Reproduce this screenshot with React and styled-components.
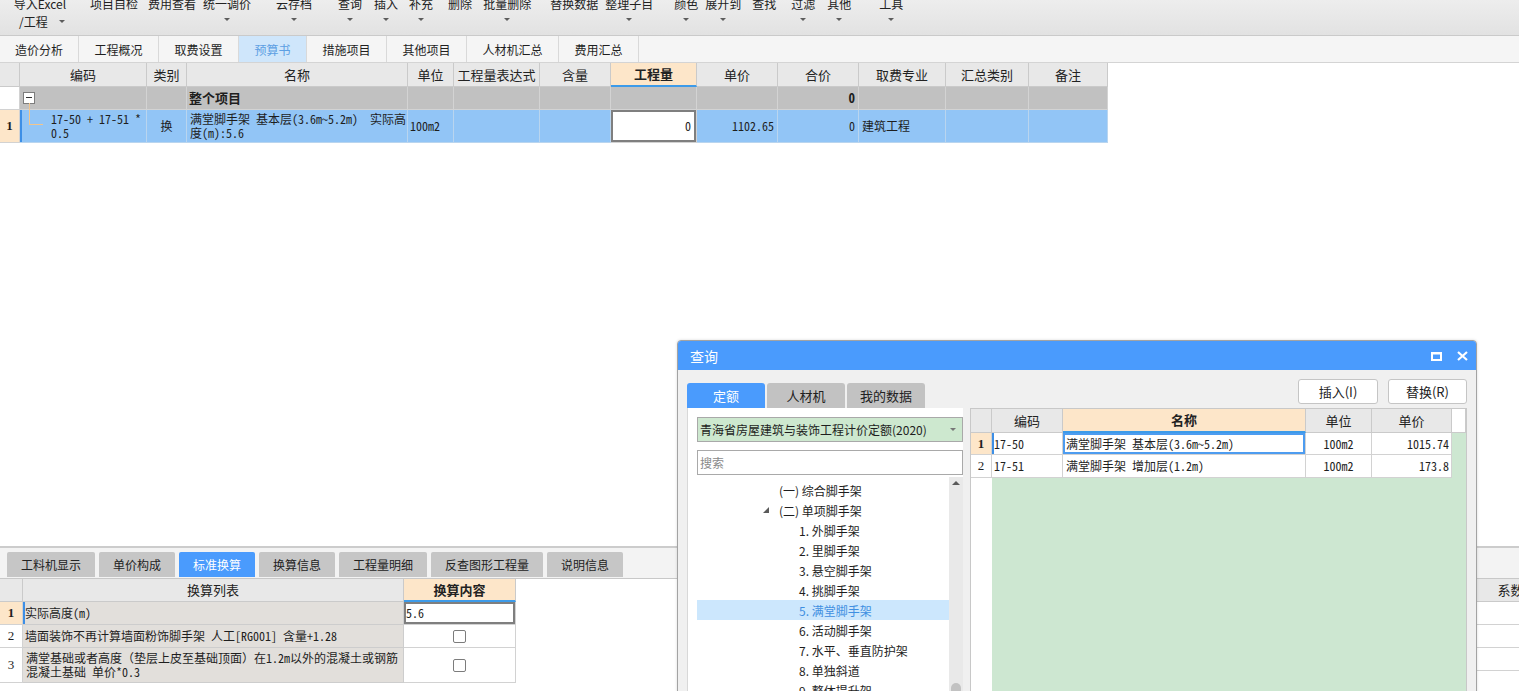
import React from 'react';
import styled, { createGlobalStyle, css } from 'styled-components';

const UI = `"Noto Sans CJK SC", "Noto Sans", sans-serif`;

const GlobalStyle = createGlobalStyle`
  html, body {
    margin: 0;
    padding: 0;
    background: #ffffff;
  }
  body {
    font-family: ${UI};
    font-size: 12px;
    color: #1f1f1f;
    overflow: hidden;
  }
  *, *::before, *::after {
    box-sizing: border-box;
  }
`;

const toolItems = [
  { label: '导入Excel', ml: 13, w: 54, sub: '/工程' },
  { label: '项目自检', ml: 23, w: 48 },
  { label: '费用查看', ml: 10, w: 48 },
  { label: '统一调价', ml: 7, w: 48, caret: true },
  { label: '云存档', ml: 25, w: 36, caret: true },
  { label: '查询', ml: 26, w: 24, caret: true },
  { label: '插入', ml: 12, w: 24, caret: true },
  { label: '补充', ml: 11, w: 24, caret: true },
  { label: '删除', ml: 15, w: 24 },
  { label: '批量删除', ml: 11, w: 48, caret: true },
  { label: '替换数据', ml: 19, w: 48 },
  { label: '整理子目', ml: 7, w: 48, caret: true },
  { label: '颜色', ml: 21, w: 24, caret: true },
  { label: '展开到', ml: 7, w: 36, caret: true },
  { label: '查找', ml: 11, w: 24 },
  { label: '过滤', ml: 15, w: 24, caret: true },
  { label: '其他', ml: 12, w: 24, caret: true },
  { label: '工具', ml: 28, w: 24, caret: true },
];

const viewTabs = [
  ['造价分析', 79],
  ['工程概况', 80],
  ['取费设置', 80],
  ['预算书', 68, true],
  ['措施项目', 80],
  ['其他项目', 80],
  ['人材机汇总', 92],
  ['费用汇总', 80],
];

const MAIN_COLS = [20, 127, 40, 221, 46, 86, 71, 86, 81, 81, 87, 83, 79];
const MAIN_HEADS = ['', '编码', '类别', '名称', '单位', '工程量表达式', '含量', '工程量', '单价', '合价', '取费专业', '汇总类别', '备注'];

const bottomTabs = ['工料机显示', '单价构成', '标准换算', '换算信息', '工程量明细', '反查图形工程量', '说明信息'];

const treeItems = [
  { text: '(一) 综合脚手架', indent: 66 },
  { text: '(二) 单项脚手架', indent: 66, open: true },
  { text: '1. 外脚手架', indent: 86 },
  { text: '2. 里脚手架', indent: 86 },
  { text: '3. 悬空脚手架', indent: 86 },
  { text: '4. 挑脚手架', indent: 86 },
  { text: '5. 满堂脚手架', indent: 86, selected: true },
  { text: '6. 活动脚手架', indent: 86 },
  { text: '7. 水平、垂直防护架', indent: 86 },
  { text: '8. 单独斜道', indent: 86 },
  { text: '9. 整体提升架', indent: 86 },
];

const tones = {
  head: { bg: '#e8e8e8', line: '#cacaca' },
  hot: { bg: '#fde6c9', line: '#cacaca' },
  blank: { bg: '#ffffff', line: '#cacaca' },
  group: { bg: '#c1c1c1', line: '#d3d3d3' },
  sel: { bg: '#92c5f6', line: '#b9d5ef' },
  plain: { bg: '#ffffff', line: '#d2d2d2' },
  peach: { bg: '#fde6c9', line: '#d2d2d2' },
  list: { bg: '#e2dfdb', line: '#cdcdcd' },
  clear: { bg: 'transparent', line: 'transparent' },
};

const justify = { left: 'flex-start', center: 'center', right: 'flex-end' };

const App = () => {
  return (
    <>
      <GlobalStyle />
      <Page>
        <Toolbar>
          {toolItems.map(item => (
            <ToolItem key={item.label} $w={item.w} $ml={item.ml}>
              <ToolLabel>{item.label}</ToolLabel>
              {item.sub ? (
                <SubLine>
                  <ToolLabel>{item.sub}</ToolLabel>
                  <Caret $ml={11} />
                </SubLine>
              ) : (
                item.caret && <Caret />
              )}
            </ToolItem>
          ))}
        </Toolbar>

        <ViewTabs>
          {viewTabs.map(([label, w, active]) => (
            <ViewTab key={label} $w={w} $active={active}>
              {label}
            </ViewTab>
          ))}
        </ViewTabs>

        <MainArea>
          <SheetGrid $cols={MAIN_COLS}>
            {MAIN_HEADS.map((h, i) => (
              <HeadCell key={`h${i}`} $tone={i === 7 ? 'hot' : 'head'}>
                {h}
              </HeadCell>
            ))}

            <Cell $tone="plain" />
            <Cell $tone="group" $pad="0 3px">
              <MinusBox />
            </Cell>
            <Cell $tone="group" />
            <Cell $tone="group" $bold $big>
              整个项目
            </Cell>
            <Cell $tone="group" />
            <Cell $tone="group" />
            <Cell $tone="group" />
            <Cell $tone="group" />
            <Cell $tone="group" />
            <Cell $tone="group" $align="right" $bold $big $pad="0 3px">
              0
            </Cell>
            <Cell $tone="group" />
            <Cell $tone="group" />
            <Cell $tone="group" />

            <NumCell $tone="peach" $bold>
              1
            </NumCell>
            <CodeCell $tone="sel" $mark $top $pad="2px 2px 0 31px">
              17-50 + 17-51 *
              <br />
              0.5
            </CodeCell>
            <Cell $tone="sel" $align="center">
              换
            </Cell>
            <Cell $tone="sel" $top $pad="2px 2px 0 3px">
              满堂脚手架 基本层(3.6m~5.2m)&nbsp;&nbsp;实际高
              <br />
              度(m):5.6
            </Cell>
            <Cell $tone="sel">100m2</Cell>
            <Cell $tone="sel" />
            <Cell $tone="sel" />
            <Cell $tone="plain" $edit $align="right" $pad="0 5px">
              0
            </Cell>
            <Cell $tone="sel" $align="right" $pad="0 3px">
              1102.65
            </Cell>
            <Cell $tone="sel" $align="right" $pad="0 3px">
              0
            </Cell>
            <Cell $tone="sel" $pad="0 3px">
              建筑工程
            </Cell>
            <Cell $tone="sel" />
            <Cell $tone="sel" />
          </SheetGrid>
        </MainArea>

        <BottomPanel>
          <BottomTabs>
            {bottomTabs.map(t => (
              <BottomTab key={t} $active={t === '标准换算'}>
                {t}
              </BottomTab>
            ))}
          </BottomTabs>
          <BottomBody>
            <ConvGrid>
              <HeadCell $tone="head" />
              <HeadCell $tone="head">换算列表</HeadCell>
              <HeadCell $tone="hot">换算内容</HeadCell>

              <NumCell $tone="peach" $bold>
                1
              </NumCell>
              <Cell $tone="list" $mark>
                实际高度(m)
              </Cell>
              <Cell $tone="plain" $edit>
                5.6
              </Cell>

              <NumCell $tone="plain">2</NumCell>
              <Cell $tone="list">墙面装饰不再计算墙面粉饰脚手架 人工[RG001] 含量+1.28</Cell>
              <Cell $tone="plain" $align="center">
                <Check />
              </Cell>

              <NumCell $tone="plain">3</NumCell>
              <Cell $tone="list" $top $pad="3px 2px 0 3px">
                <span>
                  满堂基础或者高度<Wide>（</Wide>垫层上皮至基础顶面<Wide>）</Wide>在1.2m以外的混凝土或钢筋
                  <br />
                  混凝土基础 单价*0.3
                </span>
              </Cell>
              <Cell $tone="plain" $align="center">
                <Check />
              </Cell>
            </ConvGrid>

            <FactorGrid>
              <HeadCell $tone="head">名称</HeadCell>
              <HeadCell $tone="head">系数</HeadCell>
              <Cell $tone="plain" />
              <Cell $tone="plain" />
              <Cell $tone="plain" />
              <Cell $tone="plain" />
              <Cell $tone="plain" />
              <Cell $tone="plain" />
            </FactorGrid>
          </BottomBody>
        </BottomPanel>

        <Dialog>
          <TitleBar>
            <span>查询</span>
            <TitleIcons>
              <svg width="11" height="9" viewBox="0 0 11 9">
                <rect x="1" y="1" width="9" height="7" fill="none" stroke="#fff" strokeWidth="2" />
                <line x1="0" y1="1.5" x2="11" y2="1.5" stroke="#fff" strokeWidth="2" />
              </svg>
              <svg width="11" height="10" viewBox="0 0 11 10">
                <path d="M1 1 L10 9 M10 1 L1 9" stroke="#fff" strokeWidth="2.2" />
              </svg>
            </TitleIcons>
          </TitleBar>

          <DialogBody>
            <DialogTop>
              <DlgTabs>
                <DlgTab $active>定额</DlgTab>
                <DlgTab>人材机</DlgTab>
                <DlgTab>我的数据</DlgTab>
              </DlgTabs>
              <Actions>
                <ActionBtn $w={80}>插入(I)</ActionBtn>
                <ActionBtn $w={79}>替换(R)</ActionBtn>
              </Actions>
            </DialogTop>

            <DialogMain>
              <LibPane>
                <LibSelect>
                  <span>青海省房屋建筑与装饰工程计价定额(2020)</span>
                  <SelectArrow />
                </LibSelect>
                <SearchInput placeholder="搜索" readOnly />
                <TreeWrap>
                  <TreeList>
                    {treeItems.map(item => (
                      <TreeRow key={item.text} $indent={item.indent} $selected={item.selected}>
                        <Expander>{item.open && <OpenMark />}</Expander>
                        {item.text}
                      </TreeRow>
                    ))}
                  </TreeList>
                  <ScrollTrack>
                    <UpArrow />
                    <Thumb />
                  </ScrollTrack>
                </TreeWrap>
              </LibPane>

              <QuotaGrid>
                <HeadCell $tone="head" />
                <HeadCell $tone="head">编码</HeadCell>
                <HeadCell $tone="hot">名称</HeadCell>
                <HeadCell $tone="head">单位</HeadCell>
                <HeadCell $tone="head">单价</HeadCell>
                <HeadCell $tone="blank" />

                <NumCell $tone="peach" $bold>
                  1
                </NumCell>
                <Cell $tone="plain" $mark>
                  17-50
                </Cell>
                <Cell $tone="plain" $focus $pad="0 3px">
                  满堂脚手架 基本层(3.6m~5.2m)
                </Cell>
                <Cell $tone="plain" $align="center">
                  100m2
                </Cell>
                <Cell $tone="plain" $align="right">
                  1015.74
                </Cell>
                <Cell $tone="clear" />

                <NumCell $tone="plain">2</NumCell>
                <Cell $tone="plain">17-51</Cell>
                <Cell $tone="plain" $pad="0 3px">
                  满堂脚手架 增加层(1.2m)
                </Cell>
                <Cell $tone="plain" $align="center">
                  100m2
                </Cell>
                <Cell $tone="plain" $align="right">
                  173.8
                </Cell>
                <Cell $tone="clear" />
              </QuotaGrid>
            </DialogMain>
          </DialogBody>
        </Dialog>
      </Page>
    </>
  );
};

const Page = styled.div`
  position: relative;
  width: 1519px;
  height: 691px;
  overflow: hidden;
  display: flex;
  flex-direction: column;
  background: #ffffff;
`;

/* ---------- toolbar ---------- */
const Toolbar = styled.div`
  flex: 0 0 36px;
  display: flex;
  align-items: flex-start;
  background: linear-gradient(#ededed, #e2e2e2);
  border-bottom: 1px solid #cacaca;
  overflow: hidden;
`;

const ToolItem = styled.div`
  flex: 0 0 ${p => p.$w}px;
  margin-left: ${p => p.$ml}px;
  margin-top: -4px;
  display: flex;
  flex-direction: column;
  align-items: center;
`;

const ToolLabel = styled.span`
  font-size: 12px;
  line-height: 16px;
  white-space: nowrap;
  color: #222222;
`;

const SubLine = styled.div`
  align-self: stretch;
  display: flex;
  align-items: flex-start;
  padding-left: 6px;
  margin-top: 2px;
`;

const Caret = styled.i`
  display: block;
  width: 0;
  height: 0;
  margin-top: 6px;
  margin-left: ${p => p.$ml || 0}px;
  border-left: 3px solid transparent;
  border-right: 3px solid transparent;
  border-top: 3px solid #5c5c5c;
`;

/* ---------- view tabs ---------- */
const ViewTabs = styled.div`
  flex: 0 0 27px;
  display: flex;
  background: #f5f5f5;
  border-bottom: 1px solid #d4d4d4;
`;

const ViewTab = styled.div`
  flex: 0 0 ${p => p.$w}px;
  display: flex;
  align-items: center;
  justify-content: center;
  font-size: 12px;
  border-right: 1px solid #d9d9d9;
  color: ${p => (p.$active ? '#5d9fe3' : '#1f1f1f')};
  background: ${p => (p.$active ? '#cfe6fb' : 'transparent')};
`;

/* ---------- cells ---------- */
const cellFont = css`
  font-family: ${UI};
  font-size: 12px;
  font-feature-settings: 'hwid' 1;
  line-height: 14px;
`;

const Cell = styled.div`
  position: relative;
  display: flex;
  align-items: ${p => (p.$top ? 'flex-start' : 'center')};
  justify-content: ${p => justify[p.$align || 'left']};
  padding: ${p => p.$pad || '0 2px'};
  background: ${p => tones[p.$tone || 'plain'].bg};
  border-right: 1px solid ${p => tones[p.$tone || 'plain'].line};
  border-bottom: 1px solid ${p => tones[p.$tone || 'plain'].line};
  ${cellFont};
  font-size: ${p => (p.$big ? 13 : 12)}px;
  font-weight: ${p => (p.$bold ? 700 : 400)};
  white-space: nowrap;
  overflow: hidden;
  color: #1e1e1e;
  ${p => p.$mark && 'box-shadow: inset 2px 0 0 #3d8fe6;'}
  ${p => p.$edit && 'box-shadow: inset 0 0 0 2px #7f7f7f;'}
  ${p => p.$focus && 'box-shadow: inset 0 0 0 2px #4d9cf0;'}
`;

const Wide = styled.span`
  font-feature-settings: normal;
`;

const CodeCell = styled(Cell)`
  overflow: visible;
  &::before {
    content: '';
    position: absolute;
    left: 9px;
    top: -7px;
    width: 14px;
    height: 22px;
    border-left: 1px solid #f2c58c;
    border-bottom: 1px solid #f2c58c;
  }
`;

const HeadCell = styled(Cell)`
  justify-content: center;
  font-size: 13px;
  font-feature-settings: normal;
  color: #222222;
  ${p =>
    p.$tone === 'hot' &&
    css`
      font-weight: 700;
      border-bottom: 2px solid #3d9be9;
    `}
`;

const NumCell = styled(Cell)`
  justify-content: center;
  font-family: 'Liberation Serif', serif;
  font-size: 13px;
`;

const MinusBox = styled.span`
  position: relative;
  display: block;
  width: 12px;
  height: 12px;
  background: #ffffff;
  border: 1px solid #7d7d7d;
  &::after {
    content: '';
    position: absolute;
    left: 2px;
    top: 4px;
    width: 6px;
    height: 1px;
    background: #333333;
  }
`;

const Check = styled.span`
  display: block;
  width: 13px;
  height: 13px;
  border: 1px solid #7c7c7c;
  border-radius: 2px;
  background: #ffffff;
`;

/* ---------- main sheet ---------- */
const MainArea = styled.div`
  flex: 1;
  background: #ffffff;
`;

const SheetGrid = styled.div`
  display: grid;
  grid-template-columns: ${p => p.$cols.map(c => `${c}px`).join(' ')};
  grid-template-rows: 24px 23px 33px;
  width: 1108px;
`;

/* ---------- bottom panel ---------- */
const BottomPanel = styled.div`
  flex: 0 0 145px;
  display: flex;
  flex-direction: column;
  border-top: 2px solid #cccccc;
  background: #ffffff;
`;

const BottomTabs = styled.div`
  flex: 0 0 31px;
  display: flex;
  align-items: flex-start;
  gap: 4px;
  padding: 4px 0 0 7px;
  background: #f3f3f3;
  border-bottom: 1px solid #c8c8c8;
`;

const BottomTab = styled.div`
  height: 25px;
  padding: 0 14px;
  display: flex;
  align-items: center;
  font-size: 12px;
  border-radius: 2px 2px 0 0;
  color: ${p => (p.$active ? '#ffffff' : '#222222')};
  background: ${p => (p.$active ? '#4a9bfd' : '#c6c6c6')};
`;

const BottomBody = styled.div`
  flex: 1;
  display: flex;
  align-items: flex-start;
`;

const ConvGrid = styled.div`
  display: grid;
  grid-template-columns: 23px 381px 112px;
  grid-template-rows: 23px 23px 23px 35px;
  width: 516px;
`;

const FactorGrid = styled.div`
  display: grid;
  grid-template-columns: 76px 70px;
  grid-template-rows: repeat(4, 23px);
  margin-left: auto;
  margin-right: -27px;
`;

/* ---------- query dialog ---------- */
const Dialog = styled.div`
  position: absolute;
  left: 677px;
  top: 340px;
  width: 800px;
  height: 352px;
  display: flex;
  flex-direction: column;
  background: #f0f0f0;
  border: 1px solid #a3a3a3;
  border-radius: 4px 4px 0 0;
  box-shadow: 0 0 3px rgba(0, 0, 0, 0.15);
  overflow: hidden;
`;

const TitleBar = styled.div`
  flex: 0 0 29px;
  display: flex;
  align-items: center;
  justify-content: space-between;
  padding: 1px 8px 0 12px;
  background: #4a9bfd;
  color: #ffffff;
  font-size: 14px;
`;

const TitleIcons = styled.div`
  display: flex;
  align-items: center;
  gap: 15px;
`;

const DialogBody = styled.div`
  flex: 1;
  display: flex;
  flex-direction: column;
  padding: 0 9px;
  min-height: 0;
`;

const DialogTop = styled.div`
  flex: 0 0 38px;
  display: flex;
  align-items: flex-end;
  justify-content: space-between;
`;

const DlgTabs = styled.div`
  display: flex;
  gap: 2px;
`;

const DlgTab = styled.div`
  width: 78px;
  height: 25px;
  display: flex;
  align-items: center;
  justify-content: center;
  font-size: 13px;
  border-radius: 3px 3px 0 0;
  color: ${p => (p.$active ? '#ffffff' : '#222222')};
  background: ${p => (p.$active ? '#4a9bfd' : '#c2c2c2')};
`;

const Actions = styled.div`
  display: flex;
  gap: 10px;
  margin-bottom: 4px;
`;

const ActionBtn = styled.div`
  width: ${p => p.$w}px;
  height: 25px;
  display: flex;
  align-items: center;
  justify-content: center;
  font-size: 13px;
  color: #222222;
  background: #ffffff;
  border: 1px solid #c5c5c5;
  border-radius: 3px;
`;

const DialogMain = styled.div`
  flex: 1;
  display: flex;
  gap: 7px;
  min-height: 0;
`;

const LibPane = styled.div`
  flex: 0 0 276px;
  display: flex;
  flex-direction: column;
  padding: 9px 0 0 9px;
  background: #ffffff;
  border-left: 1px solid #d8d8d8;
`;

const LibSelect = styled.div`
  flex: 0 0 25px;
  display: flex;
  align-items: center;
  justify-content: space-between;
  padding: 0 6px 0 2px;
  font-size: 12px;
  color: #1e1e1e;
  background: #cde8cf;
  border: 1px solid #a9a9a9;
  white-space: nowrap;
`;

const SelectArrow = styled.i`
  width: 0;
  height: 0;
  border-left: 3px solid transparent;
  border-right: 3px solid transparent;
  border-top: 3px solid #777777;
`;

const SearchInput = styled.input`
  flex: 0 0 25px;
  margin-top: 8px;
  padding: 0 2px;
  font-family: ${UI};
  font-size: 12px;
  background: #ffffff;
  border: 1px solid #a9a9a9;
  outline: none;
  &::placeholder {
    color: #8a8a8a;
  }
`;

const TreeWrap = styled.div`
  flex: 1;
  display: flex;
  margin-top: 2px;
  min-height: 0;
`;

const TreeList = styled.div`
  flex: 1;
  padding-top: 3px;
  overflow: hidden;
`;

const TreeRow = styled.div`
  height: 20px;
  display: flex;
  align-items: center;
  padding-left: ${p => p.$indent}px;
  font-size: 12px;
  white-space: nowrap;
  color: ${p => (p.$selected ? '#3f8fe1' : '#1e1e1e')};
  background: ${p => (p.$selected ? '#cce7fd' : 'transparent')};
`;

const Expander = styled.span`
  flex: 0 0 16px;
  display: flex;
  align-items: center;
`;

const OpenMark = styled.i`
  width: 0;
  height: 0;
  border-left: 6px solid transparent;
  border-bottom: 6px solid #5a5a5a;
`;

const ScrollTrack = styled.div`
  flex: 0 0 14px;
  display: flex;
  flex-direction: column;
  align-items: center;
  justify-content: space-between;
  padding-top: 4px;
  background: #e9e9e9;
`;

const UpArrow = styled.i`
  width: 0;
  height: 0;
  border-left: 4px solid transparent;
  border-right: 4px solid transparent;
  border-bottom: 4px solid #5a5a5a;
`;

const Thumb = styled.i`
  width: 10px;
  height: 12px;
  margin-bottom: -4px;
  border-radius: 5px;
  background: #c2c2c2;
`;

const QuotaGrid = styled.div`
  flex: 1;
  display: grid;
  grid-template-columns: 21px 71px 243px 66px 80px 1fr;
  grid-template-rows: 24px 22px 23px;
  align-content: start;
  border: 1px solid #c8c8c8;
  border-bottom: none;
  background: linear-gradient(90deg, #ffffff 21px, #cde7d1 21px);
`;

export default App;
